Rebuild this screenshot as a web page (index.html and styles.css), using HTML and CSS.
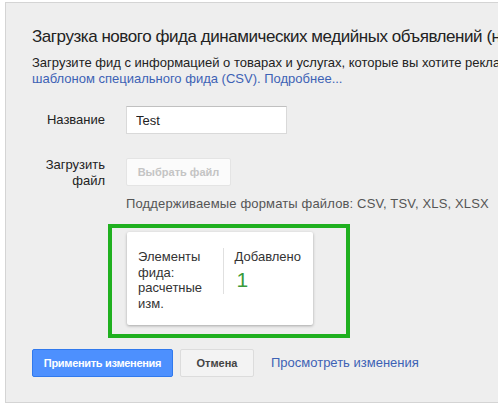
FILE: index.html
```html
<!DOCTYPE html>
<html>
<head>
  <meta charset="utf-8">
  <link rel="stylesheet" href="styles.css">
</head>
<body>
  <div class="panel">
    <h1 class="title">Загрузка нового фида динамических медийных объявлений (необязательно)</h1>
    <p class="intro">
      Загрузите фид с информацией о товарах и услугах, которые вы хотите рекламировать, в соответствии с<br>
      <a href="#">шаблоном специального фида (CSV). Подробнее...</a>
    </p>

    <div class="field field-name">
      <label class="field-label">Название</label>
      <input class="text-input" type="text" value="Test">
    </div>

    <div class="field field-file">
      <label class="field-label">Загрузить<br>файл</label>
      <div class="field-body">
        <button class="btn btn-file" disabled>Выбрать файл</button>
      </div>
    </div>
    <div class="formats">Поддерживаемые форматы файлов: CSV, TSV, XLS, XLSX</div>

    <div class="highlight">
      <div class="summary-card">
        <div class="summary-name">Элементы фида: расчетные изм.</div>
        <div class="summary-stat">
          <div class="stat-label">Добавлено</div>
          <div class="stat-value">1</div>
        </div>
      </div>
    </div>

    <div class="actions">
      <button class="btn btn-primary">Применить изменения</button>
      <button class="btn btn-default">Отмена</button>
      <a class="link-review" href="#">Просмотреть изменения</a>
    </div>
  </div>
</body>
</html>
```

FILE: styles.css
```css
* {
  margin: 0;
  padding: 0;
  box-sizing: border-box;
}

body {
  font-family: "Liberation Sans", Arial, sans-serif;
  font-size: 13px;
  line-height: 16px;
  color: #222;
  background: #fff;
  padding: 2px 0 0 5px;
  overflow: hidden;
}

a {
  color: #3d62b5;
  text-decoration: none;
}

.panel {
  width: 640px;
  background: #eeeeee;
  border: 1px solid #d4d4d4;
  padding: 22px 26px 25px 26px;
}

.title {
  font-size: 17px;
  font-weight: normal;
  letter-spacing: -0.45px;
  line-height: 23px;
  color: #222;
  white-space: nowrap;
}

.intro {
  margin-top: 7px;
  white-space: nowrap;
}

.field {
  display: flex;
  align-items: center;
}

.field-label {
  width: 73px;
  margin-right: 21px;
  text-align: right;
  color: #222;
}

.field-name {
  margin-top: 19px;
}

.text-input {
  width: 161px;
  height: 28px;
  border: 1px solid #d9d9d9;
  border-top-color: #c0c0c0;
  background: #fff;
  padding: 0 9px;
  font-family: "Liberation Sans", Arial, sans-serif;
  font-size: 13px;
  color: #222;
  outline: none;
}

.field-file {
  margin-top: 23px;
  align-items: flex-start;
}

.field-file .field-body {
  padding-top: 1px;
}

.formats {
  margin: 7px 0 0 94px;
  color: #555;
  white-space: nowrap;
  letter-spacing: 0.15px;
}

.btn {
  height: 28px;
  font-family: "Liberation Sans", Arial, sans-serif;
  font-size: 11px;
  font-weight: bold;
  border-radius: 2px;
  padding: 0;
  white-space: nowrap;
}

.btn-file {
  width: 105px;
  background: #fbfbfb;
  border: 1px solid #e4e4e4;
  color: #c4c4c4;
}

.highlight {
  margin: 12px 0 0 76px;
  width: 242px;
  border: 4px solid #1fb01f;
  padding: 4px 33px 9px 15px;
}

.summary-card {
  display: flex;
  background: #fff;
  border-radius: 2px;
  box-shadow: 0 1px 3px rgba(0, 0, 0, 0.3);
  padding: 17px 12px 14px 11px;
}

.summary-name {
  width: 76px;
  margin-right: 11px;
  line-height: 15.5px;
  color: #333;
}

.summary-stat {
  border-left: 1px solid #e0e0e0;
  padding-left: 11px;
  height: 46px;
  margin-top: -1px;
  padding-top: 1px;
  color: #333;
}

.stat-value {
  font-size: 21px;
  line-height: 24px;
  margin-top: 3px;
  color: #3a9a3a;
  padding-left: 2px;
}

.actions {
  display: flex;
  align-items: center;
  margin-top: 11px;
}

.btn-primary {
  width: 141px;
  background: #4d90fe;
  border: 1px solid #3079ed;
  color: #fff;
  letter-spacing: -0.3px;
}

.btn-default {
  width: 74px;
  margin-left: 7px;
  background: #f3f3f3;
  border: 1px solid #dcdcdc;
  color: #444;
}

.link-review {
  margin-left: 17px;
  font-size: 13px;
}
```
